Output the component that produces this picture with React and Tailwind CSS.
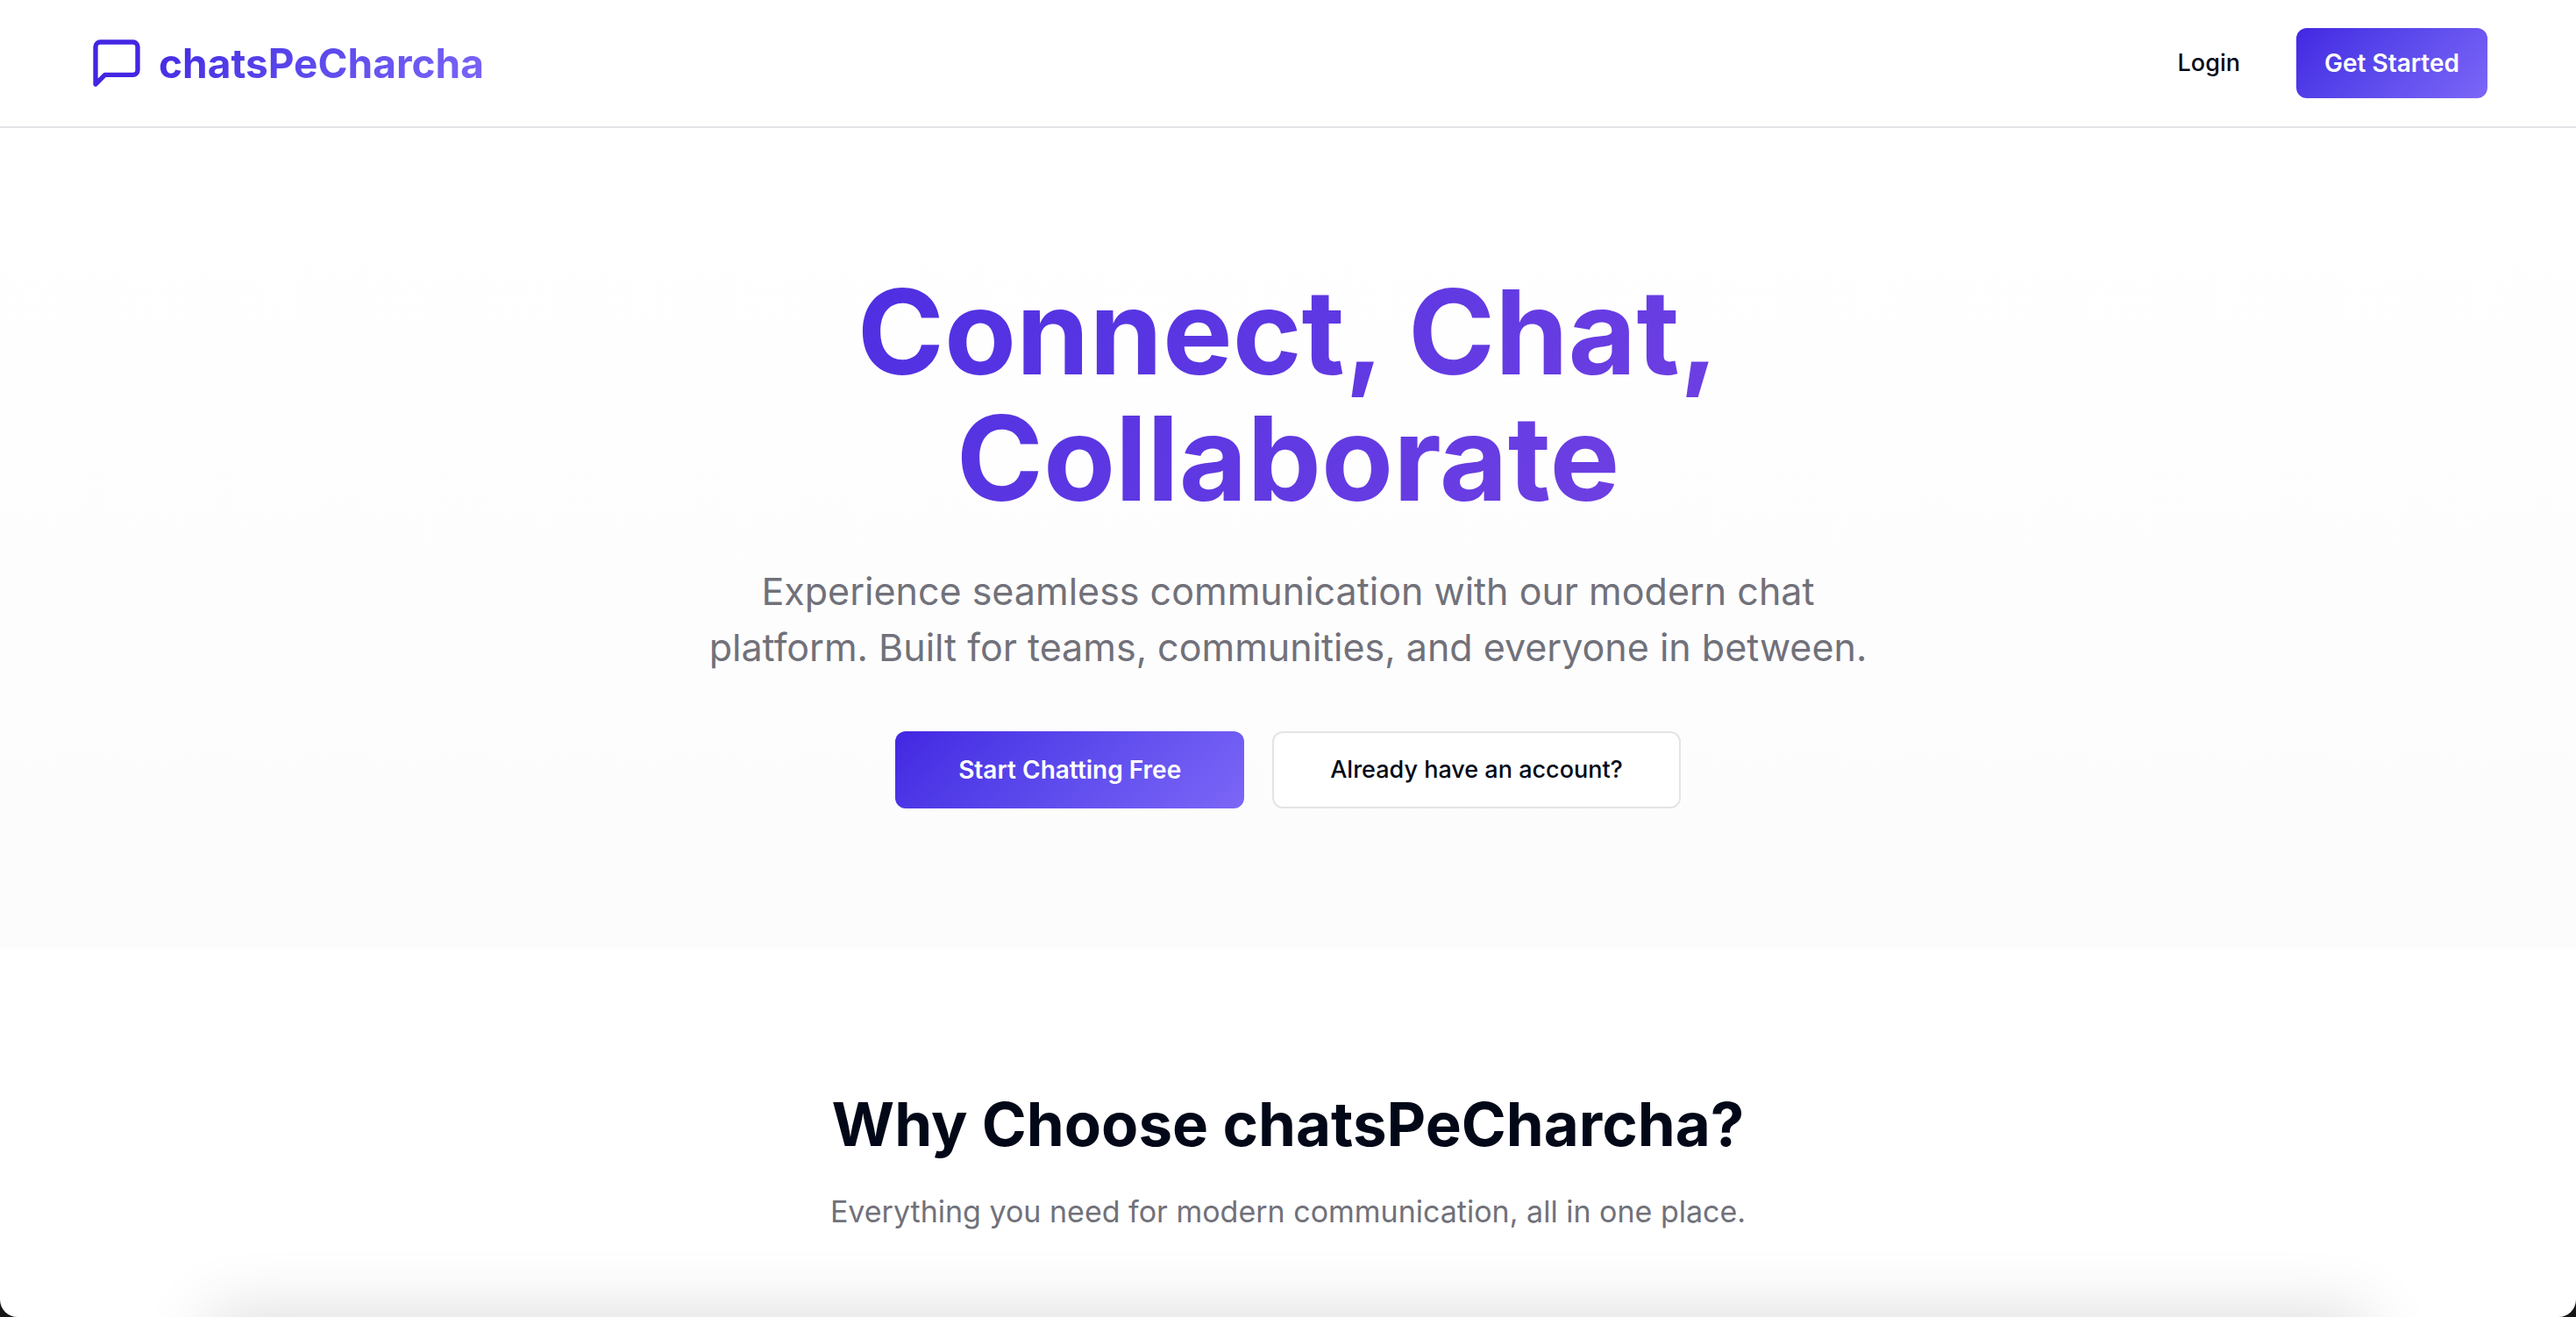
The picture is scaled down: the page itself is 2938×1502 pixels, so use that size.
import React from "react";

function ChatIcon() {
  return (
    <svg
      className="size-16 text-[#4326e2]"
      viewBox="0 0 24 24"
      fill="none"
      stroke="currentColor"
      strokeWidth="2"
      strokeLinecap="round"
      strokeLinejoin="round"
      aria-hidden="true"
    >
      <path d="M21 15a2 2 0 0 1-2 2H7l-4 4V5a2 2 0 0 1 2-2h14a2 2 0 0 1 2 2z" />
    </svg>
  );
}

function Header() {
  return (
    <header className="border-b-2 border-[#e4e4e7] bg-white">
      <div className="mx-auto flex h-36 max-w-[2800px] items-center justify-between px-8">
        <a href="#" className="flex items-center gap-4">
          <ChatIcon />
          <span className="bg-linear-135 from-[#4326e2] to-[#7c66f7] bg-clip-text text-[46px] leading-16 font-bold text-transparent">
            chatsPeCharcha
          </span>
        </a>
        <nav className="flex items-center gap-8">
          <button type="button" className="h-20 rounded-xl px-8 text-[27px] font-medium">
            Login
          </button>
          <button
            type="button"
            className="h-20 rounded-xl bg-linear-135 from-[#4326e2] to-[#7c66f7] px-8 text-[28px] font-semibold text-white"
          >
            Get Started
          </button>
        </nav>
      </div>
    </header>
  );
}

function Hero() {
  return (
    <section className="bg-linear-to-b from-white to-[#fcfcfd] px-8 py-40">
      <div className="mx-auto flex max-w-[1792px] flex-col items-center text-center">
        <h1 className="mb-12 w-full bg-linear-135 from-[#4326e2] to-[#7c45e2] bg-clip-text text-[134px] leading-36 font-bold text-transparent">
          Connect, Chat,
          <br />
          Collaborate
        </h1>
        <p className="mb-16 max-w-[1344px] text-[43px] leading-16 text-[#71717a]">
          Experience seamless communication with our modern chat platform. Built for teams,
          communities, and everyone in between.
        </p>
        <div className="flex flex-wrap justify-center gap-8">
          <button
            type="button"
            className="h-22 rounded-xl bg-linear-135 from-[#4326e2] to-[#7c66f7] px-18 text-[28px] font-semibold text-white"
          >
            Start Chatting Free
          </button>
          <button
            type="button"
            className="h-22 rounded-xl border-2 border-[#e4e4e7] bg-white px-16 text-[27px] font-medium"
          >
            Already have an account?
          </button>
        </div>
      </div>
    </section>
  );
}

function Features() {
  return (
    <section className="px-8 pt-40 text-center">
      <h2 className="mb-8 text-[69px] leading-20 font-bold">Why Choose chatsPeCharcha?</h2>
      <p className="text-[34px] leading-14 text-[#71717a]">
        Everything you need for modern communication, all in one place.
      </p>
    </section>
  );
}

export default function App() {
  return (
    <div className="bg-[#161618]">
      <main className="relative min-h-screen overflow-hidden rounded-b-[20px] bg-white font-['Inter',sans-serif] text-[#020817]">
        <Header />
        <Hero />
        <Features />
        <div className="absolute inset-x-60 top-full h-20 shadow-[0_0_80px_rgba(0,0,0,0.16)]" />
      </main>
    </div>
  );
}
